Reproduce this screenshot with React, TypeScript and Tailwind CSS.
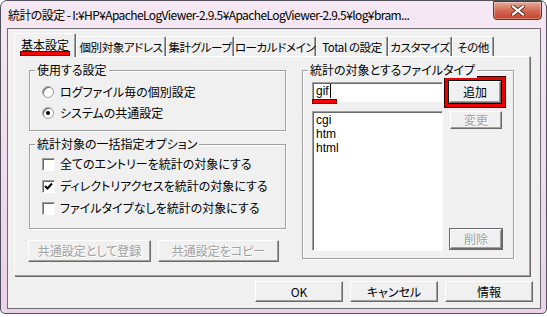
import React from 'react';

const jp = "[font-family:'Noto_Sans_CJK_JP',sans-serif] [font-feature-settings:'palt']";
const latin = "[font-family:'Liberation_Sans',sans-serif]";

const TABS = [
  { label: '個別対象アドレス', w: 'w-[90px]' },
  { label: '集計グループ', w: 'w-[68px]' },
  { label: 'ローカルドメイン', w: 'w-[82px]' },
  { label: 'Total の設定', w: 'w-[72px]' },
  { label: 'カスタマイズ', w: 'w-[64px]' },
  { label: 'その他', w: 'w-[42px]' },
];

function Btn({ label, className = '', disabled = false }: { label: string; className?: string; disabled?: boolean }) {
  return (
    <div
      className={
        'flex items-center justify-center bg-[#f0f0f0] border border-t-white border-l-white border-r-[#696969] border-b-[#696969] shadow-[inset_-1px_-1px_0_#a0a0a0] text-[12px] leading-none ' +
        (disabled ? 'text-[#a0a0a0] [text-shadow:1px_1px_0_#fff] ' : 'text-black ') +
        className
      }
    >
      {label}
    </div>
  );
}

function Group({ title, className = '', children }: { title: string; className?: string; children?: React.ReactNode }) {
  return (
    <div className={'relative border border-[#a0a0a0] shadow-[1px_1px_0_#fff,inset_1px_1px_0_#fff] ' + className}>
      <span className="absolute -top-[9px] left-[5px] bg-[#f0f0f0] px-[2px] text-[12px] leading-[16px] text-black">{title}</span>
      {children}
    </div>
  );
}

function Radio({ checked, label }: { checked?: boolean; label: string }) {
  return (
    <div className="flex h-[21px] items-center gap-[6px]">
      <div className="flex h-[12px] w-[12px] items-center justify-center rounded-full border border-[#a0a0a0] bg-white shadow-[inset_1px_1px_0_#696969]">
        {checked && <div className="h-[4px] w-[4px] rounded-full bg-black" />}
      </div>
      <span className="text-[12px] leading-none">{label}</span>
    </div>
  );
}

function Check({ checked, label }: { checked?: boolean; label: string }) {
  return (
    <div className="flex h-[22px] items-center gap-[5px]">
      <div className="flex h-[13px] w-[13px] items-center justify-center border border-t-[#a0a0a0] border-l-[#a0a0a0] border-r-white border-b-white bg-white shadow-[inset_1px_1px_0_#696969]">
        {checked && (
          <svg width="9" height="9" viewBox="0 0 9 9">
            <path d="M1 4 L3.5 6.5 L8 1.5" stroke="#000" strokeWidth="2" fill="none" />
          </svg>
        )}
      </div>
      <span className="text-[12px] leading-none">{label}</span>
    </div>
  );
}

export default function App() {
  return (
    <div className={'h-[317px] w-[547px] bg-white text-black ' + jp}>
      <div className="flex h-[314px] w-[547px] flex-col rounded-t-[7px] rounded-b-[5px] border border-[#50505c] bg-gradient-to-b from-[#f5e8f3] to-[#ead2e7] px-[6px] pb-[4px]">
        {/* title bar */}
        <div className="flex h-[27px] items-start">
          <span className="mt-[5px] ml-[1px] flex-1 whitespace-nowrap text-[12px] leading-[17px] tracking-[-0.6px] text-black">
            統計の設定 - I:¥HP¥ApacheLogViewer-2.9.5¥ApacheLogViewer-2.9.5¥log¥bram...
          </span>
          <div className="-mr-[2px] flex h-[19px] w-[49px] items-center justify-center rounded-b-[4px] border border-[#6a2a22] bg-gradient-to-b from-[#e9a99c] via-[#d36a55] to-[#c4402c] shadow-[inset_0_0_0_1px_rgba(255,255,255,0.35)]">
            <svg width="14" height="11" viewBox="0 0 14 11">
              <path d="M2 1.5 L12 9.5 M12 1.5 L2 9.5" stroke="#5a2a24" strokeWidth="4" strokeLinecap="square" />
              <path d="M2 1.5 L12 9.5 M12 1.5 L2 9.5" stroke="#fff" strokeWidth="2.2" strokeLinecap="square" />
            </svg>
          </div>
        </div>

        {/* client */}
        <div className="flex h-[281px] w-[534px] flex-col border border-[#6d6d6d] bg-[#f0f0f0]">
          {/* tab strip */}
          <div className="relative z-10 flex h-[27px] items-end pl-[6px]">
            <div className="relative -mb-[1px] flex h-[24px] w-[62px] items-start justify-center rounded-t-[2px] border-t border-l border-t-white border-l-white border-r border-r-[#696969] bg-[#f0f0f0] pt-[3px] shadow-[inset_-1px_0_0_#a0a0a0]">
              <span className="text-[12px] leading-[16px]">基本設定</span>
              <div className="absolute left-[5px] top-[17px] h-[5px] w-[50px] border border-[#7a0000] bg-[#ff0000]" />
            </div>
            {TABS.map((t) => (
              <div
                key={t.label}
                className={
                  'flex h-[20px] items-start justify-center rounded-t-[2px] border-t border-l border-t-white border-l-white border-r border-r-[#696969] pt-[2px] shadow-[inset_-1px_0_0_#a0a0a0] ' +
                  t.w
                }
              >
                <span className="whitespace-nowrap text-[11.5px] leading-[16px] tracking-[-0.4px]">{t.label}</span>
              </div>
            ))}
          </div>

          {/* panel */}
          <div className="ml-[6px] flex h-[220px] w-[516px] border border-t-white border-l-white border-r-[#a0a0a0] border-b-[#a0a0a0] shadow-[1px_1px_0_#696969] pl-[14px] pt-[13px]">
            <div className="flex w-[257px] flex-col">
              <Group title="使用する設定" className="h-[61px] pl-[12px] pt-[10px]">
                <Radio label="ログファイル毎の個別設定" />
                <Radio checked label="システムの共通設定" />
              </Group>
              <Group title="統計対象の一括指定オプション" className="mt-[13px] h-[85px] pl-[12px] pt-[8px]">
                <Check label="全てのエントリーを統計の対象にする" />
                <Check checked label="ディレクトリアクセスを統計の対象にする" />
                <Check label="ファイルタイプなしを統計の対象にする" />
              </Group>
              <div className="-ml-[1px] mt-[11px] flex gap-[7px]">
                <Btn disabled label="共通設定として登録" className="h-[22px] w-[123px]" />
                <Btn disabled label="共通設定をコピー" className="h-[22px] w-[121px]" />
              </div>
            </div>

            <Group title="統計の対象とするファイルタイプ" className="ml-[16px] flex h-[189px] w-[212px] gap-[2px] pl-[9px]">
              <div className="flex flex-col pt-[11px]">
                <div className="relative flex h-[20px] w-[131px] items-start border border-t-[#a0a0a0] border-l-[#a0a0a0] border-r-white border-b-white bg-white shadow-[inset_1px_1px_0_#696969] pl-[3px] pt-[1px]">
                  <span className={'text-[12px] leading-[14px] ' + latin}>gif</span>
                  <span className="ml-[1px] h-[14px] w-[1px] bg-black" />
                  <div className="absolute left-[-1px] top-[16px] h-[5px] w-[25px] border border-[#7a0000] bg-[#ff0000]" />
                </div>
                <div className={'mt-[9px] flex h-[140px] w-[131px] flex-col border border-t-[#a0a0a0] border-l-[#a0a0a0] border-r-white border-b-white bg-white shadow-[inset_1px_1px_0_#696969] pl-[3px] pt-[1px] text-[12px] leading-[14px] ' + latin}>
                  <span>cgi</span>
                  <span>htm</span>
                  <span>html</span>
                </div>
              </div>
              <div className="flex flex-col pt-[6px]">
                <div className="border-[3px] border-[#e60000] p-[1px] shadow-[0_0_0_1px_#300]">
                  <Btn label="追加" className="h-[22px] w-[52px] outline outline-1 outline-black" />
                </div>
                <Btn disabled label="変更" className="ml-[5px] mt-[4px] h-[18px] w-[52px]" />
                <Btn disabled label="削除" className="ml-[5px] mt-[100px] h-[20px] w-[52px] outline outline-1 outline-[#696969]" />
              </div>
            </Group>
          </div>

          {/* bottom buttons */}
          <div className="mr-[7px] mt-[5px] flex justify-end gap-[7px]">
            <Btn label="OK" className="h-[21px] w-[88px]" />
            <Btn label="キャンセル" className="h-[21px] w-[88px]" />
            <Btn label="情報" className="h-[21px] w-[88px]" />
          </div>
        </div>
      </div>
    </div>
  );
}
